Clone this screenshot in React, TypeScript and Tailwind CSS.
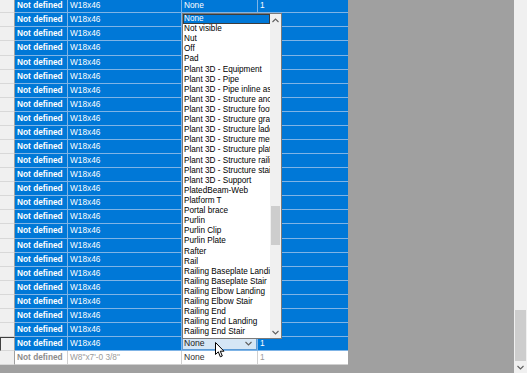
import React from "react";

const items = [
  "None",
  "Not visible",
  "Nut",
  "Off",
  "Pad",
  "Plant 3D - Equipment",
  "Plant 3D - Pipe",
  "Plant 3D - Pipe inline assembly",
  "Plant 3D - Structure anchor",
  "Plant 3D - Structure footing",
  "Plant 3D - Structure grating",
  "Plant 3D - Structure ladder",
  "Plant 3D - Structure member",
  "Plant 3D - Structure plate",
  "Plant 3D - Structure railing",
  "Plant 3D - Structure stair",
  "Plant 3D - Support",
  "PlatedBeam-Web",
  "Platform T",
  "Portal brace",
  "Purlin",
  "Purlin Clip",
  "Purlin Plate",
  "Rafter",
  "Rail",
  "Railing Baseplate Landing",
  "Railing Baseplate Stair",
  "Railing Elbow Landing",
  "Railing Elbow Stair",
  "Railing End",
  "Railing End Landing",
  "Railing End Stair",
];

const gridFont = { fontFamily: '"Liberation Sans", Arial, sans-serif' };
const uiFont = { fontFamily: '"Liberation Sans", Arial, sans-serif' };

function BlueRow({ first }: { first?: boolean }) {
  return (
    <div className="flex h-[14.08px] shrink-0">
      <div className="w-[15px] h-full bg-[#f0f0f0] border-r border-b border-r-[#a0a0a0] border-b-[#d8d8d8]" />
      <div className="w-[53px] h-full bg-[#0078d7] border-r border-b border-[#7fb4e6] text-white font-bold text-[8.3px] leading-[13px] pl-[2px] whitespace-nowrap overflow-hidden">
        Not defined
      </div>
      <div className="w-[114px] h-full bg-[#0078d7] border-r border-b border-[#7fb4e6] text-white text-[8.3px] leading-[13px] pl-[2px] whitespace-nowrap overflow-hidden">
        W18x46
      </div>
      <div className="w-[76px] h-full bg-[#0078d7] border-r border-b border-[#7fb4e6] text-white text-[8.3px] leading-[13px] pl-[2px] whitespace-nowrap overflow-hidden">
        {first ? "None" : ""}
      </div>
      <div className="w-[90px] h-full bg-[#0078d7] border-b border-[#7fb4e6] text-white text-[8.3px] leading-[13px] pl-[2px] whitespace-nowrap overflow-hidden">
        {first ? "1" : ""}
      </div>
    </div>
  );
}

function Chevron({ up, className }: { up?: boolean; className?: string }) {
  return (
    <svg width="7" height="5" viewBox="0 0 7 5" className={className}>
      <path
        d={up ? "M0.5 4 L3.5 1 L6.5 4" : "M0.5 1 L3.5 4 L6.5 1"}
        fill="none"
        stroke="#606060"
        strokeWidth="1.1"
      />
    </svg>
  );
}

export default function App() {
  const blueRows = Array.from({ length: 24 }, (_, i) => i);
  return (
    <div className="w-[527px] h-[373px] overflow-hidden flex bg-[#a0a0a0]" style={gridFont}>
      <div className="relative w-[514px] h-full overflow-hidden">
        <div className="flex flex-col -mt-[0.8px]">
          {blueRows.map((i) => (
            <BlueRow key={i} first={i === 0} />
          ))}
          {/* editing row */}
          <div className="flex h-[14.08px] shrink-0">
            <div className="w-[15px] h-full bg-[#f0f0f0] border-l border-t border-r border-b border-l-[#404040] border-t-[#404040] border-r-[#a0a0a0] border-b-[#d8d8d8]" />
            <div className="w-[53px] h-full bg-[#0078d7] border-r border-b border-[#7fb4e6] text-white font-bold text-[8.3px] leading-[13px] pl-[2px] whitespace-nowrap overflow-hidden">
              Not defined
            </div>
            <div className="w-[114px] h-full bg-[#0078d7] border-r border-b border-[#7fb4e6] text-white text-[8.3px] leading-[13px] pl-[2px] whitespace-nowrap overflow-hidden">
              W18x46
            </div>
            <div className="w-[76px] h-full bg-[#0078d7] border-r border-b border-[#7fb4e6] p-0">
              <div
                className="h-[13px] bg-[#d5e6f5] border border-[#5a9ad6] flex items-center justify-between pl-[1px] pr-[4px] text-[#1a1a1a] text-[8.6px]"
                style={uiFont}
              >
                <span className="leading-[11px]">None</span>
                <Chevron />
              </div>
            </div>
            <div className="w-[90px] h-full bg-[#0078d7] border-b border-[#7fb4e6] text-white text-[8.3px] leading-[13px] pl-[2px] whitespace-nowrap overflow-hidden">
              1
            </div>
          </div>
          {/* new/last row */}
          <div className="flex h-[14.08px] shrink-0">
            <div className="w-[15px] h-full bg-[#f0f0f0] border-r border-b border-r-[#a0a0a0] border-b-[#d8d8d8]" />
            <div className="w-[53px] h-full bg-white border-r border-b border-[#d0d0d0] text-[#8c8c8c] font-bold text-[8.3px] leading-[13px] pl-[2px] whitespace-nowrap overflow-hidden">
              Not defined
            </div>
            <div className="w-[114px] h-full bg-white border-r border-b border-[#d0d0d0] text-[#9a9a9a] text-[8.3px] leading-[13px] pl-[2px] whitespace-nowrap overflow-hidden">
              W8"x7'-0 3/8"
            </div>
            <div
              className="w-[76px] h-full bg-white border-r border-b border-[#d0d0d0] text-[#303030] text-[8.6px] leading-[13px] pl-[2px] whitespace-nowrap overflow-hidden"
              style={uiFont}
            >
              None
            </div>
            <div className="w-[90px] h-full bg-white border-b border-[#d0d0d0] text-[#9a9a9a] text-[8.3px] leading-[13px] pl-[2px] whitespace-nowrap overflow-hidden">
              1
            </div>
          </div>
        </div>

        {/* dropdown list */}
        <div
          className="absolute left-[182px] top-[13px] w-[100px] h-[326px] bg-white border border-[#7a7a7a] flex"
          style={uiFont}
        >
          <div className="flex-1 flex flex-col overflow-hidden">
            {items.map((t, i) => (
              <div
                key={t}
                className={
                  "h-[10.12px] shrink-0 text-[8.2px] leading-[10px] pl-[1px] whitespace-nowrap overflow-hidden " +
                  (i === 0
                    ? "bg-[#0078d7] text-white outline outline-1 -outline-offset-1 outline-[#3c3c3c]"
                    : "text-black")
                }
              >
                {t}
              </div>
            ))}
          </div>
          <div className="w-[11px] h-full bg-[#f0f0f0] flex flex-col items-center">
            <div className="h-[10px] flex items-center justify-center mt-[1px]">
              <Chevron up />
            </div>
            <div className="h-[181px]" />
            <div className="w-[9px] h-[39px] bg-[#cdcdcd]" />
            <div className="flex-1" />
            <div className="h-[10px] flex items-center justify-center mb-[1px]">
              <Chevron />
            </div>
          </div>
        </div>

        {/* mouse cursor */}
        <svg
          className="absolute left-[215px] top-[342px]"
          width="11"
          height="17"
          viewBox="0 0 11 17"
        >
          <path
            d="M0.5 0.5 L0.5 12.5 L3.3 9.8 L5.3 14.8 L7.3 14 L5.3 9.2 L9 9.2 Z"
            fill="white"
            stroke="black"
            strokeWidth="1"
            strokeLinejoin="miter"
          />
        </svg>
      </div>

      {/* main vertical scrollbar */}
      <div className="w-[13px] h-full bg-[#f0f0f0] flex flex-col items-center">
        <div className="flex-1" />
        <div className="w-[11px] h-[51px] bg-[#cdcdcd]" />
        <div className="h-[12px] flex items-center justify-center">
          <Chevron />
        </div>
      </div>
    </div>
  );
}
